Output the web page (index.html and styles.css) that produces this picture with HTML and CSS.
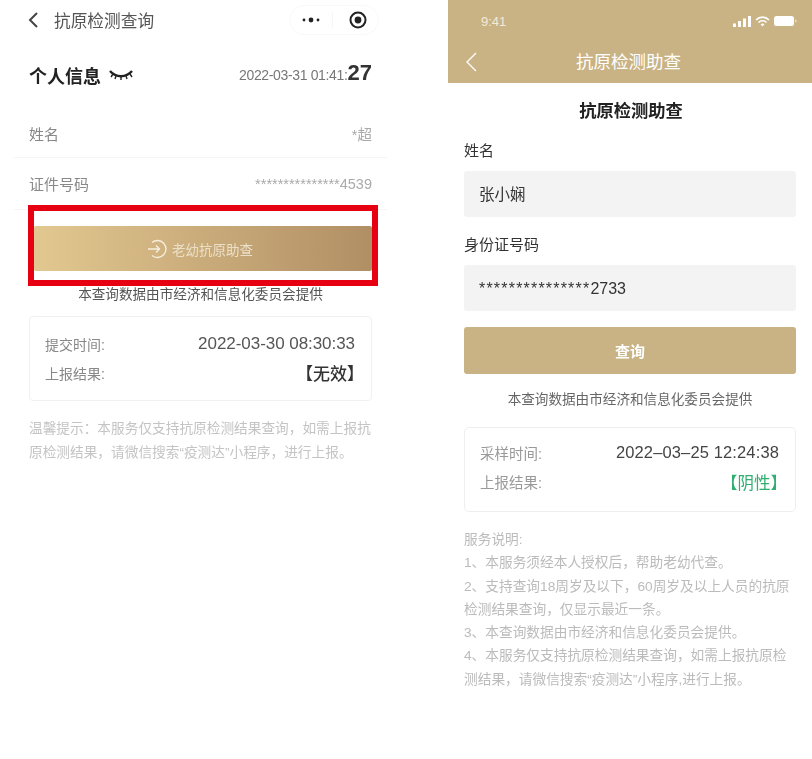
FILE: index.html
```html
<!DOCTYPE html>
<html lang="zh">
<head>
<meta charset="utf-8">
<title>抗原检测</title>
<link rel="stylesheet" href="styles.css">
</head>
<body>
<main class="page">
  <section class="left">
    <header class="l-nav">
      <svg class="l-back" width="12" height="18" viewBox="0 0 12 18"><path d="M10 2 3 9l7 7" fill="none" stroke="#444" stroke-width="2"/></svg>
      <span class="l-title">抗原检测查询</span>
      <div class="capsule">
        <svg width="20" height="8" viewBox="0 0 20 8"><circle cx="3" cy="4" r="1.400" fill="#222"/><circle cx="10" cy="4" r="2.400" fill="#222"/><circle cx="17" cy="4" r="1.400" fill="#222"/></svg>
        <span class="cap-sep"></span>
        <svg width="20" height="20" viewBox="0 0 20 20"><circle cx="10" cy="10" r="7.500" fill="none" stroke="#222" stroke-width="2"/><circle cx="10" cy="10" r="3.400" fill="#222"/></svg>
      </div>
    </header>
    <div class="l-info">
      <div class="l-info-name">
        <strong>个人信息</strong>
        <svg width="26" height="12" viewBox="0 0 26 12"><path d="M2 2c6 7 16 7 22 0" fill="none" stroke="#222" stroke-width="2.400"/><path d="M5 5 3 8m5-1-1 3m6-2v3m5-4 1 3m3-5 2 3" fill="none" stroke="#222" stroke-width="1.400"/></svg>
      </div>
      <div class="l-stamp">2022-03-31 01:41:<b>27</b></div>
    </div>
    <div class="l-row l-row-name"><span>姓名</span><span class="l-val">*超</span></div>
    <div class="l-row l-row-id"><span>证件号码</span><span class="l-val">***************4539</span></div>
    <div class="redbox">
      <button class="gold">
        <svg width="20" height="20" viewBox="0 0 20 20"><path d="M5 3.500a8.500 8.500 0 1 1 0 13M1 10h11M9 6.500l3.500 3.500L9 13.500" fill="none" stroke="#f6eedd" stroke-width="1.400"/></svg>
        <span>老幼抗原助查</span>
      </button>
    </div>
    <p class="l-note">本查询数据由市经济和信息化委员会提供</p>
    <div class="l-card">
      <div class="l-card-row"><span>提交时间:</span><span class="l-time">2022-03-30 08:30:33</span></div>
      <div class="l-card-row"><span>上报结果:</span><span class="l-result">【无效】</span></div>
    </div>
    <p class="l-tip">温馨提示：本服务仅支持抗原检测结果查询，如需上报抗原检测结果，请微信搜索“疫测达”小程序，进行上报。</p>
  </section>

  <section class="right">
    <header class="r-head">
      <div class="status">
        <span>9:41</span>
        <div class="status-icons">
          <svg width="18" height="11" viewBox="0 0 18 11"><path d="M0 7.500h3V11H0zM5 5h3v6H5zM10 2.500h3V11h-3zM15 0h3v11h-3z" fill="#fff"/></svg>
          <svg width="15" height="11" viewBox="0 0 15 11"><path d="M1 4a9 9 0 0 1 13 0M3.500 6.500a5.500 5.500 0 0 1 8 0" fill="none" stroke="#fff" stroke-width="1.700"/><path d="M5.500 8.300a3 3 0 0 1 4 0L7.500 10.500z" fill="#fff"/></svg>
          <svg width="23" height="10" viewBox="0 0 23 10"><rect x="0" y="0" width="20" height="10" rx="2.500" fill="#fff"/><rect x="21" y="3.500" width="1.500" height="3" rx=".7" fill="#e6dcc4"/></svg>
        </div>
      </div>
      <div class="r-nav">
        <svg class="r-back" width="12" height="20" viewBox="0 0 12 20"><path d="M11 1 2 10l9 9" fill="none" stroke="#fff" stroke-width="1.300"/></svg>
        <span>抗原检测助查</span>
      </div>
    </header>
    <div class="r-body">
      <h1>抗原检测助查</h1>
      <label class="field-label">姓名</label>
      <div class="field">张小娴</div>
      <label class="field-label">身份证号码</label>
      <div class="field field-id"><span class="mask">***************</span>2733</div>
      <button class="query">查询</button>
      <p class="r-note">本查询数据由市经济和信息化委员会提供</p>
      <div class="r-card">
        <div class="r-card-row"><span>采样时间:</span><span class="r-time">2022–03–25 12:24:38</span></div>
        <div class="r-card-row"><span>上报结果:</span><span class="r-result">【阴性】</span></div>
      </div>
      <div class="r-help">
        <p>服务说明:</p>
        <p>1、本服务须经本人授权后，帮助老幼代查。</p>
        <p>2、支持查询18周岁及以下，60周岁及以上人员的抗原检测结果查询，仅显示最近一条。</p>
        <p>3、本查询数据由市经济和信息化委员会提供。</p>
        <p>4、本服务仅支持抗原检测结果查询，如需上报抗原检测结果，请微信搜索“疫测达”小程序,进行上报。</p>
      </div>
    </div>
  </section>
</main>
</body>
</html>
```
FILE: styles.css
```css
* { box-sizing: border-box; }
html, body { margin: 0; padding: 0; background: #fff; }
body { font-family: "Liberation Sans", "Noto Sans CJK SC", sans-serif; }
p, h1 { margin: 0; }
button { font-family: inherit; border: 0; padding: 0; }

.page { display: flex; width: 812px; height: 759px; overflow: hidden; }

/* left, blurry screenshot */
.left { width: 406px; flex: none; padding: 0 34px 0 29px; filter: blur(0.7px); color: #666; }
.l-nav { display: flex; align-items: center; height: 40px; }
.l-back { margin-right: 15px; flex: none; margin-left: -2px; }
.l-title { font-size: 16.700px; color: #555; }
.capsule { margin-left: auto; margin-right: -7px; width: 90px; height: 30px; border: 1px solid #f8f8f8; border-radius: 15px; display: flex; align-items: center; padding-left: 11px; }
.cap-sep { width: 1px; height: 16px; background: #f6f6f6; margin: 0 15px 0 11px; }

.l-info { display: flex; align-items: center; justify-content: space-between; height: 70px; }
.l-info-name { display: flex; align-items: center; gap: 7px; }
.l-info-name strong { font-size: 18px; color: #222; }
.l-stamp { font-size: 14px; color: #777; letter-spacing: -0.350px; position: relative; top: -2px; display: flex; align-items: baseline; }
.l-stamp b { font-size: 22px; color: #333; letter-spacing: 0; }

.l-row { display: flex; justify-content: space-between; align-items: center; font-size: 15px; color: #888; margin: 0 -15px; padding: 0 15px; border-bottom: 1px solid #f5f5f5; }
.l-row-name { height: 48px; }
.l-row-id { height: 52px; }
.l-val { color: #aaa; font-size: 14.500px; }

.redbox { margin: -5px -6px 0 -1px; height: 81px; border: 6px solid #e60012; background: #fff; padding-top: 15px; position: relative; display: flex; flex-direction: column; }
.gold { width: 100%; height: 45px; padding-right: 6px; border-radius: 2px; background: linear-gradient(90deg, #e2c890, #b18f65); color: #ebdfc8; font-size: 13.500px; display: flex; align-items: center; justify-content: center; gap: 5px; }

.l-note { font-size: 13.600px; line-height: 16px; color: #555; text-align: center; margin-top: 1px; }
.l-card { margin-top: 13px; height: 85px; border: 1px solid #f0f0f0; border-radius: 4px; padding: 12px 16px 0 15px; }
.l-card-row { display: flex; justify-content: space-between; align-items: center; height: 29px; font-size: 14px; color: #888; }
.l-time { font-size: 17px; color: #555; letter-spacing: -0.050px; }
.l-result { font-size: 17px; color: #333; font-weight: 500; margin-right: -9px; }
.l-tip { margin-top: 16px; font-size: 13.680px; line-height: 24px; color: #c4c4c4; }

/* right */
.right { width: 364px; flex: none; margin-left: 42px; filter: blur(0.35px); }
.r-head { height: 83px; background: #c9b385; color: #fff; }
.status { display: flex; justify-content: space-between; align-items: center; height: 42px; padding: 0 15px 0 33px; font-size: 13px; color: #f2ead8; }
.status-icons { display: flex; align-items: center; gap: 4px; }
.r-nav { position: relative; text-align: center; font-size: 17.500px; line-height: 41px; padding-right: 3px; }
.r-back { position: absolute; left: 17px; top: 10px; }

.r-body { padding: 0 16px; }
h1 { font-size: 17.300px; line-height: 24px; font-weight: 700; color: #222; text-align: center; margin-top: 16px; padding-left: 2px; }
.field-label { display: block; font-size: 15px; line-height: 22px; color: #333; margin-top: 17px; }
.field { margin-top: 9px; height: 46px; border-radius: 3px; background: #f3f3f3; padding-left: 15px; font-size: 15.500px; line-height: 47px; color: #333; }
.field-id { font-size: 16px; line-height: 48px; }
.mask { letter-spacing: 1.200px; }
.query { display: block; width: 100%; margin-top: 16px; height: 47px; border-radius: 3px; background: #c9b385; color: #fff; font-size: 15px; font-weight: 700; }
.r-note { margin-top: 16px; font-size: 13.600px; line-height: 20px; color: #666; text-align: center; }
.r-card { margin-top: 17px; height: 85px; border: 1px solid #eee; border-radius: 5px; padding: 10px 16px 0 15px; }
.r-card-row { display: flex; justify-content: space-between; align-items: center; height: 29px; font-size: 14.500px; color: #999; }
.r-time { font-size: 16.500px; color: #444; letter-spacing: 0.130px; }
.r-result { font-size: 16.500px; color: #2eaf6f; margin-right: -8px; }
.r-help { margin-top: 16px; font-size: 13.700px; line-height: 23.300px; color: #bbb; }
```
